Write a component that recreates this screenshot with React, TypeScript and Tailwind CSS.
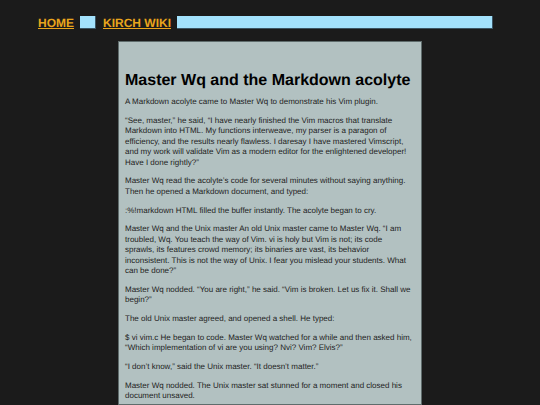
export default function App() {
  const paras = [
    "A Markdown acolyte came to Master Wq to demonstrate his Vim plugin.",
    "“See, master,” he said, “I have nearly finished the Vim macros that translate Markdown into HTML. My functions interweave, my parser is a paragon of efficiency, and the results nearly flawless. I daresay I have mastered Vimscript, and my work will validate Vim as a modern editor for the enlightened developer! Have I done rightly?”",
    "Master Wq read the acolyte’s code for several minutes without saying anything. Then he opened a Markdown document, and typed:",
    ":%!markdown HTML filled the buffer instantly. The acolyte began to cry.",
    "Master Wq and the Unix master An old Unix master came to Master Wq. “I am troubled, Wq. You teach the way of Vim. vi is holy but Vim is not; its code sprawls, its features crowd memory; its binaries are vast, its behavior inconsistent. This is not the way of Unix. I fear you mislead your students. What can be done?”",
    "Master Wq nodded. “You are right,” he said. “Vim is broken. Let us fix it. Shall we begin?”",
    "The old Unix master agreed, and opened a shell. He typed:",
    "$ vi vim.c He began to code. Master Wq watched for a while and then asked him, “Which implementation of vi are you using? Nvi? Vim? Elvis?”",
    "“I don’t know,” said the Unix master. “It doesn’t matter.”",
    "Master Wq nodded. The Unix master sat stunned for a moment and closed his document unsaved.",
  ];

  return (
    <div className="h-[405px] overflow-hidden bg-[#1b1b1b] font-['Liberation_Sans',Arial,sans-serif] [text-rendering:geometricPrecision]">
      {/* nav */}
      <nav className="flex items-start pl-[38px] pt-[16px] h-[41px]">
        <a className="text-[12px] font-bold leading-[13px] text-[#e9a61c] underline underline-offset-[1px] mt-[1px]">
          HOME
        </a>
        <span className="ml-[6px] w-[16px] h-[13px] bg-[#a3e2fd] border-r border-b border-[#3b5564]" />
        <a className="ml-[7px] text-[12px] font-bold leading-[13px] text-[#e9a61c] underline underline-offset-[1px] mt-[1px]">
          KIRCH WIKI
        </a>
        <span className="ml-[6px] w-[316px] h-[13px] bg-[#a3e2fd] border-r border-b border-[#3b5564]" />
      </nav>

      {/* article card */}
      <main className="ml-[118px] w-[304px] min-h-[364px] bg-[#b2c1c1] border border-[#5f6c6c] pl-[6px] pr-[8px] pt-[30px] text-[#222]">
        <h1 className="text-[16px] font-bold leading-[18px] text-black mb-[7px]">
          Master Wq and the Markdown acolyte
        </h1>
        <div className="flex flex-col gap-[8.3px]">
          {paras.map((p, i) => (
            <p key={i} className="text-[8px] leading-[10.45px]">
              {p}
            </p>
          ))}
        </div>
      </main>
    </div>
  );
}
